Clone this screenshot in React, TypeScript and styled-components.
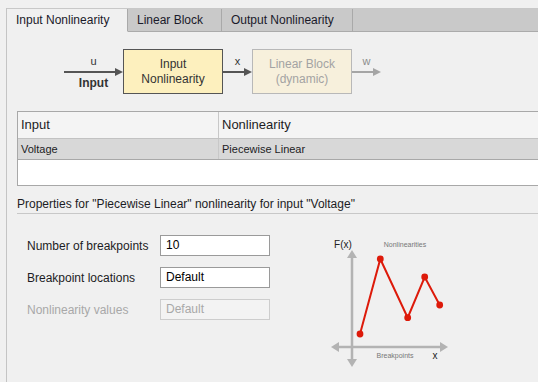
import React from 'react';
import styled, {createGlobalStyle} from 'styled-components';

const Global = createGlobalStyle`
  html, body {
    margin: 0;
    padding: 0;
    background: #f0f0f0;
  }
  body {
    font-family: "Liberation Sans", Arial, sans-serif;
    font-size: 12px;
    color: #1c1c24;
  }
`;

const Page = styled.div`
  width: 538px;
  height: 382px;
  overflow: hidden;
  padding: 8px 0 0 6px;
  box-sizing: border-box;
`;

const Panel = styled.div`
  border-left: 1px solid #c4c4c4;
  height: 374px;
  width: 560px;
`;

const TabBar = styled.div`
  display: flex;
  height: 24px;
  background: #c9c9c9;
  border-top: 1px solid #c8c8c8;
  box-sizing: border-box;
`;

const Tab = styled.div<{ $w: number; $active?: boolean }>`
  width: ${p => p.$w}px;
  box-sizing: border-box;
  padding-left: 9px;
  line-height: 22px;
  font-size: 12px;
  background: ${p => (p.$active ? '#f0f0f0' : '#c9c9c9')};
  border-right: 1px solid #a9a9a9;
  border-bottom: ${p => (p.$active ? '1px solid #f0f0f0' : '1px solid #ababab')};
  color: #1a1a2a;
`;

const TabFill = styled.div`
  flex: 1;
  border-bottom: 1px solid #ababab;
`;

const Content = styled.div`
  padding-left: 10px;
`;

const Diagram = styled.div`
  display: flex;
  align-items: center;
  padding: 17px 0 0 47px;
  height: 45px;
  margin-bottom: 17px;
`;

const Wire = styled.div<{ $w: number }>`
  width: ${p => p.$w}px;
  display: flex;
  flex-direction: column;
  align-items: center;
`;

const WireLabel = styled.div<{ $faded?: boolean; $bold?: boolean }>`
  height: 14px;
  line-height: 14px;
  font-size: ${p => (p.$bold ? 12 : 11)}px;
  font-weight: ${p => (p.$bold ? 'bold' : 'normal')};
  color: ${p => (p.$faded ? '#8c8c8c' : '#333')};
`;

const Block = styled.div<{ $faded?: boolean }>`
  width: 100px;
  height: 45px;
  box-sizing: border-box;
  border: 1px solid ${p => (p.$faded ? '#b8b8b8' : '#555')};
  background: ${p => (p.$faded ? '#f7f0dc' : '#fdf0be')};
  color: ${p => (p.$faded ? '#a3a3a3' : '#333')};
  display: flex;
  flex-direction: column;
  align-items: center;
  justify-content: center;
  font-size: 12px;
  line-height: 15px;
  text-align: center;
`;

function Arrow({w, color}: { w: number; color: string }) {
  return (
    <svg width={w} height={8} viewBox={`0 0 ${w} 8`}>
      <line x1={0} y1={4} x2={w - 6} y2={4} stroke={color} strokeWidth={2}/>
      <polygon points={`${w - 8},0 ${w},4 ${w - 8},8`} fill={color}/>
    </svg>
  );
}

const Table = styled.div`
  width: 530px;
  border-top: 1px solid #a8a8a8;
  border-bottom: 1px solid #a8a8a8;
  border-left: 1px solid #a8a8a8;
  background: #fff;
`;

const Row = styled.div<{ $kind: 'head' | 'sel' | 'empty' }>`
  display: grid;
  grid-template-columns: 200px 1fr;
  height: ${p => (p.$kind === 'head' ? 26 : p.$kind === 'sel' ? 20 : 25)}px;
  background: ${p => (p.$kind === 'head' ? '#f4f4f4' : p.$kind === 'sel' ? '#d8d8d8' : '#fff')};
  border-bottom: ${p => (p.$kind === 'head' ? '1px solid #c2c2c2' : p.$kind === 'sel' ? '1px solid #a8a8a8' : 'none')};
  font-size: ${p => (p.$kind === 'head' ? 13 : 11)}px;
  line-height: ${p => (p.$kind === 'head' ? 26 : 20)}px;
  color: #1c1c24;
`;

const Cell = styled.div`
  padding-left: 3px;
  & + & {
    border-left: 1px solid #c8c8c8;
  }
`;

const Heading = styled.div`
  width: 530px;
  padding-top: 11px;
  line-height: 14px;
  height: 14px;
  padding-bottom: 2px;
  border-bottom: 1px solid #c8c8c8;
`;

const FormArea = styled.div`
  display: flex;
  align-items: flex-start;
  padding: 21px 0 0 10px;
`;

const Fields = styled.div`
  display: grid;
  grid-template-columns: 133px 110px;
  grid-auto-rows: 21px;
  row-gap: 11px;
  align-items: center;
`;

const FieldLabel = styled.div<{ $disabled?: boolean }>`
  font-size: 12px;
  color: ${p => (p.$disabled ? '#a8a8a8' : '#1c1c24')};
`;

const Field = styled.div<{ $disabled?: boolean }>`
  height: 21px;
  box-sizing: border-box;
  border: 1px solid ${p => (p.$disabled ? '#cdcdcd' : '#9a9a9a')};
  background: ${p => (p.$disabled ? '#f3f3f3' : '#fff')};
  color: ${p => (p.$disabled ? '#a8a8a8' : '#000')};
  padding-left: 5px;
  line-height: 19px;
  font-size: 12px;
`;

const Chart = styled.svg`
  margin-left: 55px;
  flex: none;
`;

function NonlinearityChart() {
  const axis = '#b3b3b3';
  const red = '#dd1a0a';
  const pts: [number, number][] = [[35, 99], [55.3, 24], [82.7, 82.7], [99.7, 42], [114.7, 70]];
  return (
    <Chart width={130} height={135} viewBox="0 0 130 135">
      <line x1={27} y1={20} x2={27} y2={127} stroke={axis} strokeWidth={2.5}/>
      <polygon points="27,15 22,23 32,23" fill={axis}/>
      <polygon points="27,132 22,124 32,124" fill={axis}/>
      <line x1={10} y1={112} x2={119} y2={112} stroke={axis} strokeWidth={2.5}/>
      <polygon points="6,112 14,107 14,117" fill={axis}/>
      <polygon points="123,112 115,107 115,117" fill={axis}/>
      <polyline points={pts.map(p => p.join(',')).join(' ')} fill="none" stroke={red} strokeWidth={2}/>
      {pts.map((p, i) => <circle key={i} cx={p[0]} cy={p[1]} r={3.4} fill={red}/>)}
      <text x={18} y={13} fontSize={10} textAnchor="middle" fill="#222" fontFamily="Liberation Sans, Arial, sans-serif">F(x)</text>
      <text x={80} y={12} fontSize={7} textAnchor="middle" fill="#777" fontFamily="Liberation Sans, Arial, sans-serif">Nonlinearities</text>
      <text x={70} y={123} fontSize={7} textAnchor="middle" fill="#777" fontFamily="Liberation Sans, Arial, sans-serif">Breakpoints</text>
      <text x={110} y={124} fontSize={10} textAnchor="middle" fill="#222" fontFamily="Liberation Sans, Arial, sans-serif">x</text>
    </Chart>
  );
}

export default function App() {
  return (
    <Page>
      <Global/>
      <Panel>
        <TabBar>
          <Tab $w={121} $active>Input Nonlinearity</Tab>
          <Tab $w={94}>Linear Block</Tab>
          <Tab $w={131}>Output Nonlinearity</Tab>
          <TabFill/>
        </TabBar>
        <Content>
          <Diagram>
            <Wire $w={59}>
              <WireLabel>u</WireLabel>
              <Arrow w={59} color="#555"/>
              <WireLabel $bold>Input</WireLabel>
            </Wire>
            <Block>
              <div>Input</div>
              <div>Nonlinearity</div>
            </Block>
            <Wire $w={29}>
              <WireLabel>x</WireLabel>
              <Arrow w={29} color="#555"/>
              <WireLabel/>
            </Wire>
            <Block $faded>
              <div>Linear Block</div>
              <div>(dynamic)</div>
            </Block>
            <Wire $w={29}>
              <WireLabel $faded>w</WireLabel>
              <Arrow w={29} color="#a5a5a5"/>
              <WireLabel/>
            </Wire>
          </Diagram>
          <Table>
            <Row $kind="head">
              <Cell>Input</Cell>
              <Cell>Nonlinearity</Cell>
            </Row>
            <Row $kind="sel">
              <Cell>Voltage</Cell>
              <Cell>Piecewise Linear</Cell>
            </Row>
            <Row $kind="empty"/>
          </Table>
          <Heading>Properties for "Piecewise Linear" nonlinearity for input "Voltage"</Heading>
          <FormArea>
            <Fields>
              <FieldLabel>Number of breakpoints</FieldLabel>
              <Field>10</Field>
              <FieldLabel>Breakpoint locations</FieldLabel>
              <Field>Default</Field>
              <FieldLabel $disabled>Nonlinearity values</FieldLabel>
              <Field $disabled>Default</Field>
            </Fields>
            <NonlinearityChart/>
          </FormArea>
        </Content>
      </Panel>
    </Page>
  );
}
